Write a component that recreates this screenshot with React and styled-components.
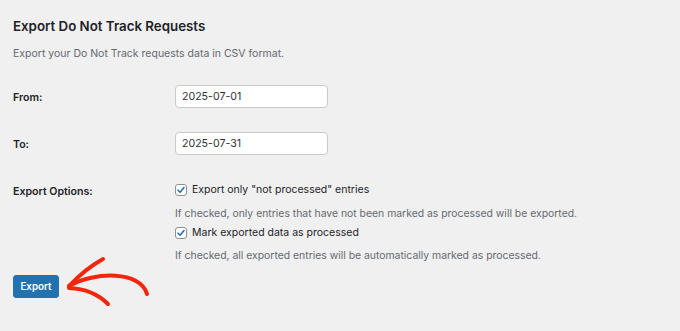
import React from "react";
import styled, { createGlobalStyle } from "styled-components";

const GlobalStyle = createGlobalStyle`
  body {
    margin: 0;
    background: #f0f0f1;
    font-family: Inter, "Liberation Sans", sans-serif;
    color: #1d2327;
  }
`;

const Page = styled.div`
  padding: 15px 13px;
`;

const Title = styled.h2`
  margin: 0;
  font-size: 13.3px;
  line-height: 22px;
  font-weight: 600;
`;

const Description = styled.p`
  margin: 7px 0 0;
  font-size: 10.5px;
  line-height: 20px;
  color: #646970;
`;

const FormTable = styled.div`
  display: grid;
  grid-template-columns: 162px 1fr;
  row-gap: 23px;
  margin-top: 21px;
  align-items: start;
`;

const Label = styled.div`
  font-size: 10.6px;
  font-weight: 600;
  line-height: ${(p) => p.$lh || 23}px;
  padding-top: ${(p) => p.$pt || 1}px;
`;

const DateInput = styled.input`
  box-sizing: border-box;
  width: 153px;
  height: 23px;
  padding: 0 6px;
  border: 1px solid #c9cacd;
  border-radius: 4px;
  background: #fff;
  font-family: inherit;
  font-size: 10.6px;
  color: #2c3338;
`;

const Options = styled.div`
  display: flex;
  flex-direction: column;
`;

const CheckLine = styled.label`
  display: flex;
  align-items: center;
  gap: 5px;
  height: 21px;
  font-size: 10.5px;
  color: #1d2327;
`;

const Box = styled.span`
  box-sizing: border-box;
  width: 12px;
  height: 12px;
  border: 1px solid #8c8f94;
  border-radius: 3px;
  background: #fff;
  display: flex;
  align-items: center;
  justify-content: center;
`;

const Help = styled.p`
  margin: ${(p) => p.$mt}px 0 0;
  font-size: 10.4px;
  line-height: 16px;
  color: #646970;
`;

const ButtonRow = styled.div`
  position: relative;
  margin-top: 10px;
`;

const Button = styled.button`
  width: 46px;
  height: 23px;
  padding: 0;
  border: 1px solid #2271b1;
  border-radius: 3px;
  background: #2271b1;
  color: #fff;
  font-family: inherit;
  font-size: 9.8px;
  font-weight: 600;
`;

const Arrow = styled.svg`
  position: absolute;
  left: 42px;
  top: -23px;
  overflow: visible;
`;

function Checkbox({ children }) {
  return (
    <CheckLine>
      <Box>
        <svg width="10" height="10" viewBox="0 0 10 10">
          <path d="M2 5.2 L4.1 7.3 L8 2.6" fill="none" stroke="#2271b1" strokeWidth="1.6" strokeLinecap="round" strokeLinejoin="round" />
        </svg>
      </Box>
      {children}
    </CheckLine>
  );
}

export default function App() {
  return (
    <Page>
      <GlobalStyle />
      <Title>Export Do Not Track Requests</Title>
      <Description>Export your Do Not Track requests data in CSV format.</Description>
      <FormTable>
        <Label>From:</Label>
        <DateInput defaultValue="2025-07-01" />
        <Label>To:</Label>
        <DateInput defaultValue="2025-07-31" />
        <Label $lh={21} $pt={2}>Export Options:</Label>
        <Options>
          <Checkbox>Export only "not processed" entries</Checkbox>
          <Help $mt={6}>If checked, only entries that have not been marked as processed will be exported.</Help>
          <Checkbox>Mark exported data as processed</Checkbox>
          <Help $mt={5}>If checked, all exported entries will be automatically marked as processed.</Help>
        </Options>
      </FormTable>
      <ButtonRow>
        <Button>Export</Button>
        <Arrow width="105" height="60" viewBox="0 0 105 60">
          <g fill="none" stroke="#f2250d" strokeWidth="4" strokeLinecap="round">
            <path d="M14 35 Q30 18 48 8" />
            <path d="M14 35 C40 20 86 20 92 43" />
            <path d="M14 37 Q38 38 53 53" />
          </g>
        </Arrow>
      </ButtonRow>
    </Page>
  );
}
